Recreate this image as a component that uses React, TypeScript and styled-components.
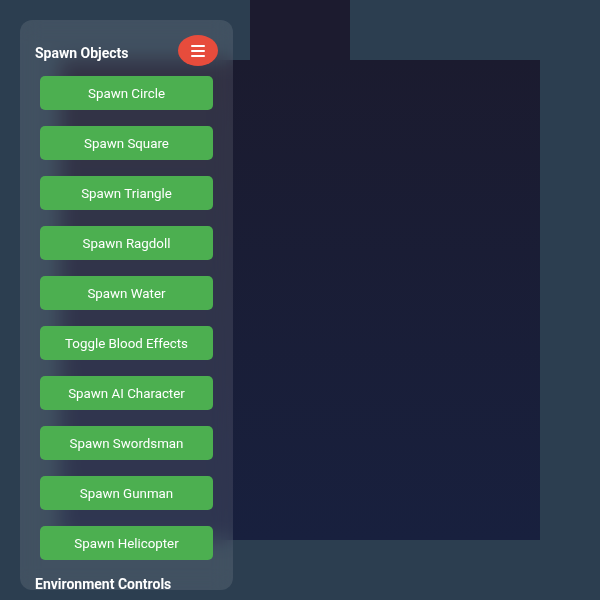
import React from "react";
import styled, { createGlobalStyle } from "styled-components";

const GlobalStyle = createGlobalStyle`
  html, body {
    margin: 0;
    padding: 0;
    width: 600px;
    height: 600px;
    overflow: hidden;
    background: #2c3e50;
    font-family: Roboto, "Liberation Sans", sans-serif;
  }
`;

const Stage = styled.div`
  position: relative;
  width: 600px;
  height: 600px;
  display: flex;
  align-items: center;
  justify-content: center;
  background: #2c3e50;
`;

const Canvas = styled.div`
  position: relative;
  width: 480px;
  height: 480px;
  background: linear-gradient(180deg, #1b1b2f 0%, #18203e 100%);
`;

const Block = styled.div`
  position: absolute;
  left: 190px;
  top: -60px;
  width: 100px;
  height: 60px;
  background: #1c1b2f;
`;

const Panel = styled.div`
  position: absolute;
  top: 20px;
  left: 20px;
  width: 213px;
  height: 570px;
  box-sizing: border-box;
  padding: 15px;
  border-radius: 12px;
  background: rgba(255, 255, 255, 0.1);
  backdrop-filter: blur(10px);
  -webkit-backdrop-filter: blur(10px);
  overflow: hidden;
  display: flex;
  flex-direction: column;
`;

const Header = styled.div`
  display: flex;
  align-items: center;
  justify-content: space-between;
  height: 31px;
`;

const Title = styled.h3<{ $offset?: number }>`
  margin: 0;
  margin-top: ${(p) => p.$offset ?? 0}px;
  color: #ffffff;
  font-size: 14px;
  font-weight: 700;
  line-height: 17px;
`;

const MenuButton = styled.button`
  width: 40px;
  height: 31px;
  border: none;
  border-radius: 50%;
  background: #e74c3c;
  display: flex;
  flex-direction: column;
  align-items: center;
  justify-content: center;
  gap: 3px;
  padding: 0;
  cursor: pointer;
`;

const Bar = styled.span`
  display: block;
  width: 14px;
  height: 2px;
  border-radius: 1px;
  background: #ffffff;
`;

const ButtonList = styled.div`
  display: flex;
  flex-direction: column;
  gap: 16px;
  padding: 0 5px;
  margin-top: 10px;
`;

const ActionButton = styled.button`
  height: 34px;
  width: 100%;
  border: none;
  border-radius: 5px;
  background: #4caf50;
  color: #ffffff;
  font-family: Roboto, "Liberation Sans", sans-serif;
  font-size: 13.333px;
  padding: 0;
  cursor: pointer;
`;

const actions = [
  "Spawn Circle",
  "Spawn Square",
  "Spawn Triangle",
  "Spawn Ragdoll",
  "Spawn Water",
  "Toggle Blood Effects",
  "Spawn AI Character",
  "Spawn Swordsman",
  "Spawn Gunman",
  "Spawn Helicopter",
];

export default function App() {
  return (
    <>
      <GlobalStyle />
      <Stage>
        <Canvas>
          <Block />
        </Canvas>
        <Panel>
          <Header>
            <Title $offset={6}>Spawn Objects</Title>
            <MenuButton aria-label="menu">
              <Bar />
              <Bar />
              <Bar />
            </MenuButton>
          </Header>
          <ButtonList>
            {actions.map((a) => (
              <ActionButton key={a}>{a}</ActionButton>
            ))}
          </ButtonList>
          <Title $offset={16}>Environment Controls</Title>
        </Panel>
      </Stage>
    </>
  );
}
